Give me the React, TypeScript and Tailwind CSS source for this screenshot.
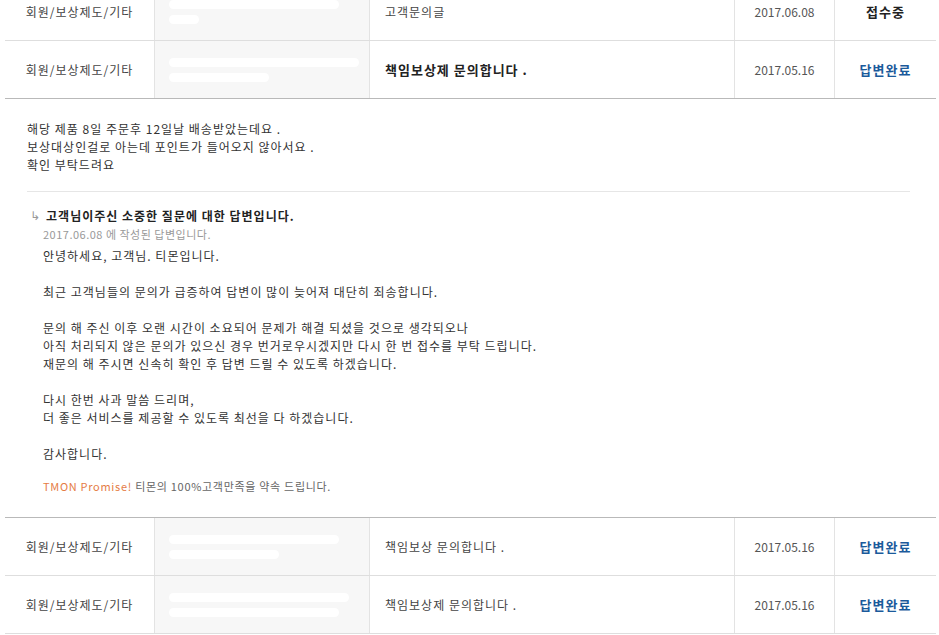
import React from "react";

type Row = {
    category: string;
    title: string;
    bold?: boolean;
    date: string;
    status: string;
    done: boolean;
    blur: number[];
};

const font = { fontFamily: '"Noto Sans CJK KR", "Liberation Sans", sans-serif' };

function BlurCell({ bars }: { bars: number[] }) {
    return (
        <div className="h-full bg-[#f7f7f7] border-r border-[#e3e3e3] px-[14px] flex flex-col justify-center gap-[6px]">
            <div className="h-[9px] rounded-full bg-white" style={{ width: bars[0] }} />
            <div className="h-[9px] rounded-full bg-white" style={{ width: bars[1] }} />
        </div>
    );
}

function TableRow({ row, last }: { row: Row; last?: "dark" | "none" }) {
    return (
        <div
            className={
                "grid grid-cols-[150px_215px_365px_100px_101px] h-[58px] text-[12px] " +
                (last === "dark" ? "border-b border-[#b9b9b9]" : "border-b border-[#dedede]")
            }
        >
            <div className="flex items-center justify-center border-r border-[#e3e3e3] text-[#444]">{row.category}</div>
            <BlurCell bars={row.blur} />
            <div
                className={
                    "flex items-center pl-[15px] border-r border-[#e3e3e3] " +
                    (row.bold ? "font-bold text-[#222] text-[13px]" : "text-[#444]")
                }
            >
                {row.title}
            </div>
            <div className="flex items-center justify-center border-r border-[#e3e3e3] text-[#555] tracking-normal">
                {row.date}
            </div>
            <div
                className={
                    "flex items-center justify-center font-bold text-[13px] " +
                    (row.done ? "text-[#1b5a9b]" : "text-[#222]")
                }
            >
                {row.status}
            </div>
        </div>
    );
}

export default function App() {
    const top: Row[] = [
        { category: "회원/보상제도/기타", title: "고객문의글", date: "2017.06.08", status: "접수중", done: false, blur: [170, 30] },
        { category: "회원/보상제도/기타", title: "책임보상제 문의합니다 .", bold: true, date: "2017.05.16", status: "답변완료", done: true, blur: [190, 100] },
    ];
    const bottom: Row[] = [
        { category: "회원/보상제도/기타", title: "책임보상 문의합니다 .", date: "2017.05.16", status: "답변완료", done: true, blur: [170, 110] },
        { category: "회원/보상제도/기타", title: "책임보상제 문의합니다 .", date: "2017.05.16", status: "답변완료", done: true, blur: [180, 170] },
    ];

    return (
        <main className="min-h-screen bg-white overflow-hidden tracking-[1px]" style={font}>
            <div className="ml-[5px] w-[931px] -mt-[17px]">
                <TableRow row={top[0]} />
                <TableRow row={top[1]} last="dark" />

                {/* opened question + answer */}
                <section className="border-b border-[#b9b9b9] pl-[22px] pr-[26px] pt-[21px] pb-[22px] text-[12px] leading-[18px] text-[#333]">
                    <p>해당 제품 8일 주문후 12일날 배송받았는데요 .</p>
                    <p>보상대상인걸로 아는데 포인트가 들어오지 않아서요 .</p>
                    <p>확인 부탁드려요</p>

                    <div className="mt-[17px] border-t border-[#e6e6e6]" />

                    <div className="pt-[15px]">
                        <div className="flex items-center gap-[5px]">
                            <span className="text-[#999] text-[12px] pl-[3px]" style={{ fontFamily: '"DejaVu Sans", sans-serif' }}>
                                ↳
                            </span>
                            <span className="font-bold text-[#222]">고객님이주신 소중한 질문에 대한 답변입니다.</span>
                        </div>
                        <p className="pl-[16px] text-[11px] text-[#999] tracking-[0.5px]">2017.06.08 에 작성된 답변입니다.</p>

                        <div className="pl-[16px] mt-[4px]">
                            <p>안녕하세요, 고객님. 티몬입니다.</p>
                            <p>&nbsp;</p>
                            <p>최근 고객님들의 문의가 급증하여 답변이 많이 늦어져 대단히 죄송합니다.</p>
                            <p>&nbsp;</p>
                            <p>문의 해 주신 이후 오랜 시간이 소요되어 문제가 해결 되셨을 것으로 생각되오나</p>
                            <p>아직 처리되지 않은 문의가 있으신 경우 번거로우시겠지만 다시 한 번 접수를 부탁 드립니다.</p>
                            <p>재문의 해 주시면 신속히 확인 후 답변 드릴 수 있도록 하겠습니다.</p>
                            <p>&nbsp;</p>
                            <p>다시 한번 사과 말씀 드리며,</p>
                            <p>더 좋은 서비스를 제공할 수 있도록 최선을 다 하겠습니다.</p>
                            <p>&nbsp;</p>
                            <p>감사합니다.</p>
                            <p className="mt-[14px] text-[11px] text-[#666] tracking-[0.7px]">
                                <span className="text-[#e57c45]">TMON Promise!</span> 티몬의 100%고객만족을 약속 드립니다.
                            </p>
                        </div>
                    </div>
                </section>

                <TableRow row={bottom[0]} />
                <TableRow row={bottom[1]} />
            </div>
        </main>
    );
}
